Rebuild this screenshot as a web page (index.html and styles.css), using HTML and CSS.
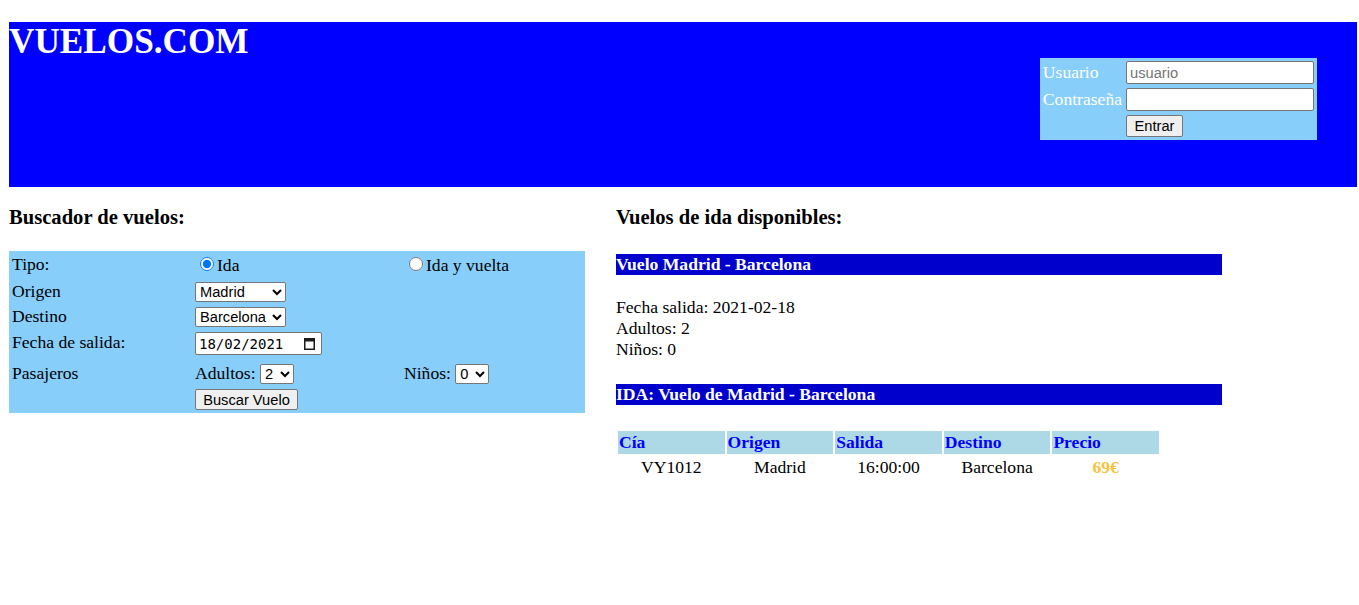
FILE: index.html
```html
<!DOCTYPE html>
<html lang="es">
<head>
<meta charset="utf-8">
<title>VUELOS.COM</title>
<link rel="stylesheet" href="styles.css">
</head>
<body>
<header class="top">
  <h1 class="logo">VUELOS.COM</h1>
  <form class="login">
    <table class="login-table">
      <tr>
        <td class="login-label">Usuario</td>
        <td><input class="field" type="text" placeholder="usuario"></td>
      </tr>
      <tr>
        <td class="login-label">Contraseña</td>
        <td><input class="field" type="password"></td>
      </tr>
      <tr>
        <td></td>
        <td><button class="btn btn-enter" type="button">Entrar</button></td>
      </tr>
    </table>
  </form>
</header>

<main class="main">
  <section class="search">
    <h3 class="title">Buscador de vuelos:</h3>
    <table class="search-table">
      <colgroup>
        <col class="col-a">
        <col class="col-b">
        <col>
      </colgroup>
      <tr class="r1">
        <td>Tipo:</td>
        <td><input class="radio" type="radio" name="tipo" checked>Ida</td>
        <td><input class="radio" type="radio" name="tipo">Ida y vuelta</td>
      </tr>
      <tr class="r2">
        <td>Origen</td>
        <td>
          <select class="sel sel-city">
            <option>Madrid</option>
            <option>Barcelona</option>
          </select>
        </td>
        <td></td>
      </tr>
      <tr class="r3">
        <td>Destino</td>
        <td>
          <select class="sel sel-city">
            <option>Barcelona</option>
            <option>Madrid</option>
          </select>
        </td>
        <td></td>
      </tr>
      <tr class="r4">
        <td>Fecha de salida:</td>
        <td>
          <div class="date">
            <span class="date-text">18/02/2021</span>
            <svg class="cal" width="11" height="12" viewBox="0 0 11 12" aria-hidden="true">
              <path fill="#1b1b1b" fill-rule="evenodd" d="M0 0h11v12H0z M1.5 3.5h8v7h-8z"/>
            </svg>
          </div>
        </td>
        <td></td>
      </tr>
      <tr class="r5">
        <td>Pasajeros</td>
        <td>Adultos: <select class="sel sel-num"><option>2</option><option>1</option></select></td>
        <td>Niños: <select class="sel sel-num"><option>0</option><option>1</option></select></td>
      </tr>
      <tr class="r6">
        <td></td>
        <td><button class="btn btn-search" type="button">Buscar Vuelo</button></td>
        <td></td>
      </tr>
    </table>
  </section>

  <section class="results">
    <h3 class="title">Vuelos de ida disponibles:</h3>
    <div class="banner banner-first">Vuelo Madrid - Barcelona</div>
    <p class="info">Fecha salida: 2021-02-18<br>Adultos: 2<br>Niños: 0</p>
    <div class="banner">IDA: Vuelo de Madrid - Barcelona</div>
    <table class="flights">
      <tr>
        <th>Cía</th>
        <th>Origen</th>
        <th>Salida</th>
        <th>Destino</th>
        <th>Precio</th>
      </tr>
      <tr>
        <td>VY1012</td>
        <td>Madrid</td>
        <td>16:00:00</td>
        <td>Barcelona</td>
        <td class="price">69€</td>
      </tr>
    </table>
  </section>
</main>
</body>
</html>
```

FILE: styles.css
```css
html, body {
  background: #ffffff;
}

body {
  margin: 0;
  font-family: "Liberation Serif", "Times New Roman", serif;
  font-size: 17.6px;
  color: #000000;
}

/* ---------- header ---------- */
.top {
  margin: 22px 2px 0 9px;
  height: 165px;
  background: #0000ff;
  display: flex;
  justify-content: space-between;
  align-items: flex-start;
}

.logo {
  margin: 0;
  font-size: 35.2px;
  line-height: 39px;
  font-weight: bold;
  color: #ffffff;
}

.login {
  margin: 36px 40px 0 0;
}

.login-table {
  background: #87cefa;
  border-spacing: 2px;
}

.login-table td {
  padding: 1px;
}

.login-label {
  color: #ffffff;
  white-space: nowrap;
}

.field {
  display: block;
  box-sizing: border-box;
  width: 188px;
  height: 23px;
  margin: 0;
  padding: 1px 3px;
  border: 1px solid #767676;
  border-radius: 2px;
  background: #ffffff;
  font-family: "Liberation Sans", Arial, sans-serif;
  font-size: 14.67px;
  color: #000000;
}

.field::placeholder {
  color: #757575;
}

.btn {
  display: block;
  box-sizing: border-box;
  margin: 0;
  padding: 0;
  border: 1px solid #767676;
  border-radius: 2px;
  background: #efefef;
  font-family: "Liberation Sans", Arial, sans-serif;
  font-size: 14.67px;
  color: #000000;
}

.btn-enter {
  width: 57px;
  height: 22px;
}

.btn-search {
  width: 103px;
  height: 21px;
}

/* ---------- main ---------- */
.main {
  display: flex;
  align-items: flex-start;
  padding-left: 9px;
}

.title {
  margin: 19px 0 22px;
  font-size: 20.6px;
  line-height: 23px;
  font-weight: bold;
}

.search {
  width: 576px;
  flex: none;
}

.results {
  width: 606px;
  flex: none;
  margin-left: 31px;
}

/* ---------- search form ---------- */
.search-table {
  width: 576px;
  table-layout: fixed;
  border-spacing: 2px;
  background: #87cefa;
}

.col-a {
  width: 181px;
}

.col-b {
  width: 207px;
}

.search-table td {
  padding: 1px;
  vertical-align: top;
  white-space: nowrap;
}

.r1 { height: 25px; }
.r2 { height: 23px; }
.r3 { height: 24px; }
.r4 { height: 29px; }
.r5 { height: 24px; }
.r6 { height: 23px; }

.radio {
  width: 14px;
  height: 14px;
  margin: 3px 3px 0 5px;
  vertical-align: baseline;
}

.sel {
  box-sizing: border-box;
  height: 20px;
  margin: 0;
  border: 1px solid #767676;
  border-radius: 2px;
  background: #ffffff;
  font-family: "Liberation Sans", Arial, sans-serif;
  font-size: 14.67px;
  color: #000000;
}

.sel-city {
  width: 91px;
}

.sel-num {
  width: 34px;
}

.date {
  display: inline-flex;
  align-items: center;
  justify-content: space-between;
  box-sizing: border-box;
  width: 127px;
  height: 23px;
  padding: 0 6px 0 3px;
  border: 1px solid #767676;
  border-radius: 2px;
  background: #ffffff;
  vertical-align: top;
}

.date-text {
  font-family: "DejaVu Sans Mono", "Liberation Mono", monospace;
  font-size: 14px;
  color: #000000;
}

.cal {
  display: block;
}

/* ---------- results ---------- */
.banner {
  margin: 24px 0 0;
  height: 21px;
  line-height: 21px;
  background: #0000cd;
  color: #ffffff;
  font-weight: bold;
  white-space: nowrap;
}

.banner-first {
  margin-top: 25px;
}

.info {
  margin: 22px 0 24px;
  line-height: 21px;
}

.flights {
  width: 545px;
  margin-top: 24px;
  border-spacing: 2px;
  table-layout: fixed;
}

.flights th {
  height: 23px;
  padding: 1px;
  box-sizing: border-box;
  background: #add8e6;
  color: #0000ff;
  text-align: left;
  font-weight: bold;
}

.flights td {
  padding: 1px;
  text-align: center;
}

.price {
  color: #f9c23c;
  font-weight: bold;
}
```
